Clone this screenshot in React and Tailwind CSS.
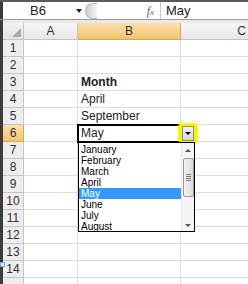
import React from 'react';

const rows = [1, 2, 3, 4, 5, 6, 7, 8, 9, 10, 11, 12, 13, 14, 15];
const cells = { 3: 'Month', 4: 'April', 5: 'September', 6: 'May' };
const months = ['January', 'February', 'March', 'April', 'May', 'June', 'July', 'August'];

const App = () => {
  return (
    <div className="relative w-[248px] h-[284px] overflow-hidden bg-white font-['Liberation_Sans',Arial,sans-serif] text-[#222]">
      {/* barra superior */}
      <div className="h-[2px] bg-[#5a5a5a]" />
      <div className="flex h-[18px] border-b border-[#9a9a9a]">
        <div className="w-[3px] bg-[#3c3c3c]" />
        <div className="flex w-[82px] items-center bg-white pl-[27px] text-[13px]">
          <span className="flex-1">B6</span>
          <span className="mr-[3px] h-0 w-0 border-x-[3px] border-t-[4px] border-x-transparent border-t-[#222]" />
        </div>
        <div className="flex w-[75px] items-center bg-white">
          <div className="h-[16px] w-[12px] rounded-l-full border border-r-0 border-[#b5b5b5] bg-gradient-to-r from-[#cfcfcf] to-[#f4f4f4]" />
          <span className="ml-auto mr-[6px] font-['Liberation_Serif',serif] text-[12px] italic text-[#666]">
            f<span className="text-[9px]">x</span>
          </span>
        </div>
        <div className="flex flex-1 items-center border-l border-[#c8c8c8] bg-white pl-[5px] text-[13px]">May</div>
      </div>
      <div className="flex h-[3px]">
        <div className="w-[3px] bg-[#3c3c3c]" />
        <div className="flex-1 bg-[#e9e9e9]" />
      </div>

      {/* cabecera de columnas */}
      <div className="flex h-[17px] text-[12px] text-[#333]">
        <div className="w-[3px] bg-[#3c3c3c]" />
        <div className="relative w-[21px] border-b border-r border-[#c5c5c5] bg-gradient-to-b from-[#f4f4f4] to-[#e2e2e2]">
          <span className="absolute bottom-[2px] right-[2px] h-0 w-0 border-b-[9px] border-l-[9px] border-b-[#a9a9a9] border-l-transparent" />
        </div>
        <div className="flex w-[54px] items-center justify-center border-b border-r border-[#c5c5c5] bg-gradient-to-b from-[#f7f7f7] to-[#e6e6e6]">A</div>
        <div className="flex w-[103px] items-center justify-center border-b border-r border-[#e0a84a] bg-gradient-to-b from-[#fbe0ad] to-[#f2c36c]">B</div>
        <div className="flex flex-1 items-center justify-end border-b border-[#c5c5c5] bg-gradient-to-b from-[#f7f7f7] to-[#e6e6e6] pr-[2px]">C</div>
      </div>

      {/* filas */}
      {rows.map((r) => (
        <div key={r} className="flex h-[17px]">
          <div className="w-[3px] bg-[#3c3c3c]" />
          <div
            className={
              r === 6
                ? 'flex w-[21px] items-center justify-center border-b border-r border-[#e0a84a] bg-gradient-to-b from-[#fbe0ad] to-[#f2c36c] text-[12px] text-[#333]'
                : 'flex w-[21px] items-center justify-center border-b border-r border-[#c5c5c5] bg-[#ededed] text-[12px] text-[#333]'
            }
          >
            {r < 15 ? r : ''}
          </div>
          <div className="w-[54px] border-b border-r border-[#dadcdd]" />
          <div
            className={
              r === 3
                ? 'flex w-[103px] items-center border-b border-r border-[#dadcdd] pl-[3px] text-[12px] font-bold'
                : 'flex w-[103px] items-center border-b border-r border-[#dadcdd] pl-[3px] text-[12px]'
            }
          >
            {cells[r]}
          </div>
          <div className="flex-1 border-b border-[#dadcdd]" />
        </div>
      ))}

      {/* marcador lateral */}
      <div className="absolute left-0 top-[262px] h-[5px] w-[5px] border border-[#7aa6d6] bg-[#dbe9f8]" />

      {/* celda activa */}
      <div className="absolute left-[77px] top-[124px] h-[19px] w-[105px] border-2 border-black" />

      {/* botón desplegable */}
      <div className="absolute left-[179px] top-[124px] h-[18px] w-[18px] rounded-[3px] bg-[#f4f400] shadow-[0_0_2px_1px_#f4f400]" />
      <div className="absolute left-[182px] top-[126px] flex h-[15px] w-[12px] items-center justify-center border border-[#8c8c8c] bg-gradient-to-b from-[#f2f2f2] to-[#d6d6d6]">
        <span className="h-0 w-0 border-x-[3px] border-t-[3px] border-x-transparent border-t-black" />
      </div>

      {/* lista */}
      <div className="absolute left-[78px] top-[142px] flex h-[90px] w-[117px] border border-black bg-white">
        <div className="flex w-[103px] flex-col pt-[1px] font-['Liberation_Sans',Arial,sans-serif] text-[10px] leading-[11px] text-black">
          {months.map((m) => (
            <div
              key={m}
              className={m === 'May' ? 'h-[11px] bg-[#3399ff] pl-[2px] text-white' : 'h-[11px] pl-[2px]'}
            >
              {m}
            </div>
          ))}
        </div>
        <div className="ml-auto flex w-[13px] flex-col items-center border-l border-[#e8e8e8] bg-[#f4f4f4]">
          <div className="flex h-[14px] items-center">
            <span className="h-0 w-0 border-x-[3px] border-b-[3px] border-x-transparent border-b-[#555]" />
          </div>
          <div className="mt-[1px] flex h-[39px] w-[11px] flex-col items-center justify-center gap-[1px] rounded-[2px] border border-[#9a9a9a] bg-gradient-to-r from-[#f2f2f2] to-[#d9d9d9]">
            <span className="h-px w-[5px] bg-[#777]" />
            <span className="h-px w-[5px] bg-[#777]" />
            <span className="h-px w-[5px] bg-[#777]" />
            <span className="h-px w-[5px] bg-[#777]" />
          </div>
          <div className="mt-auto flex h-[12px] items-center">
            <span className="h-0 w-0 border-x-[3px] border-t-[3px] border-x-transparent border-t-[#555]" />
          </div>
        </div>
      </div>
    </div>
  );
};

export default App;
